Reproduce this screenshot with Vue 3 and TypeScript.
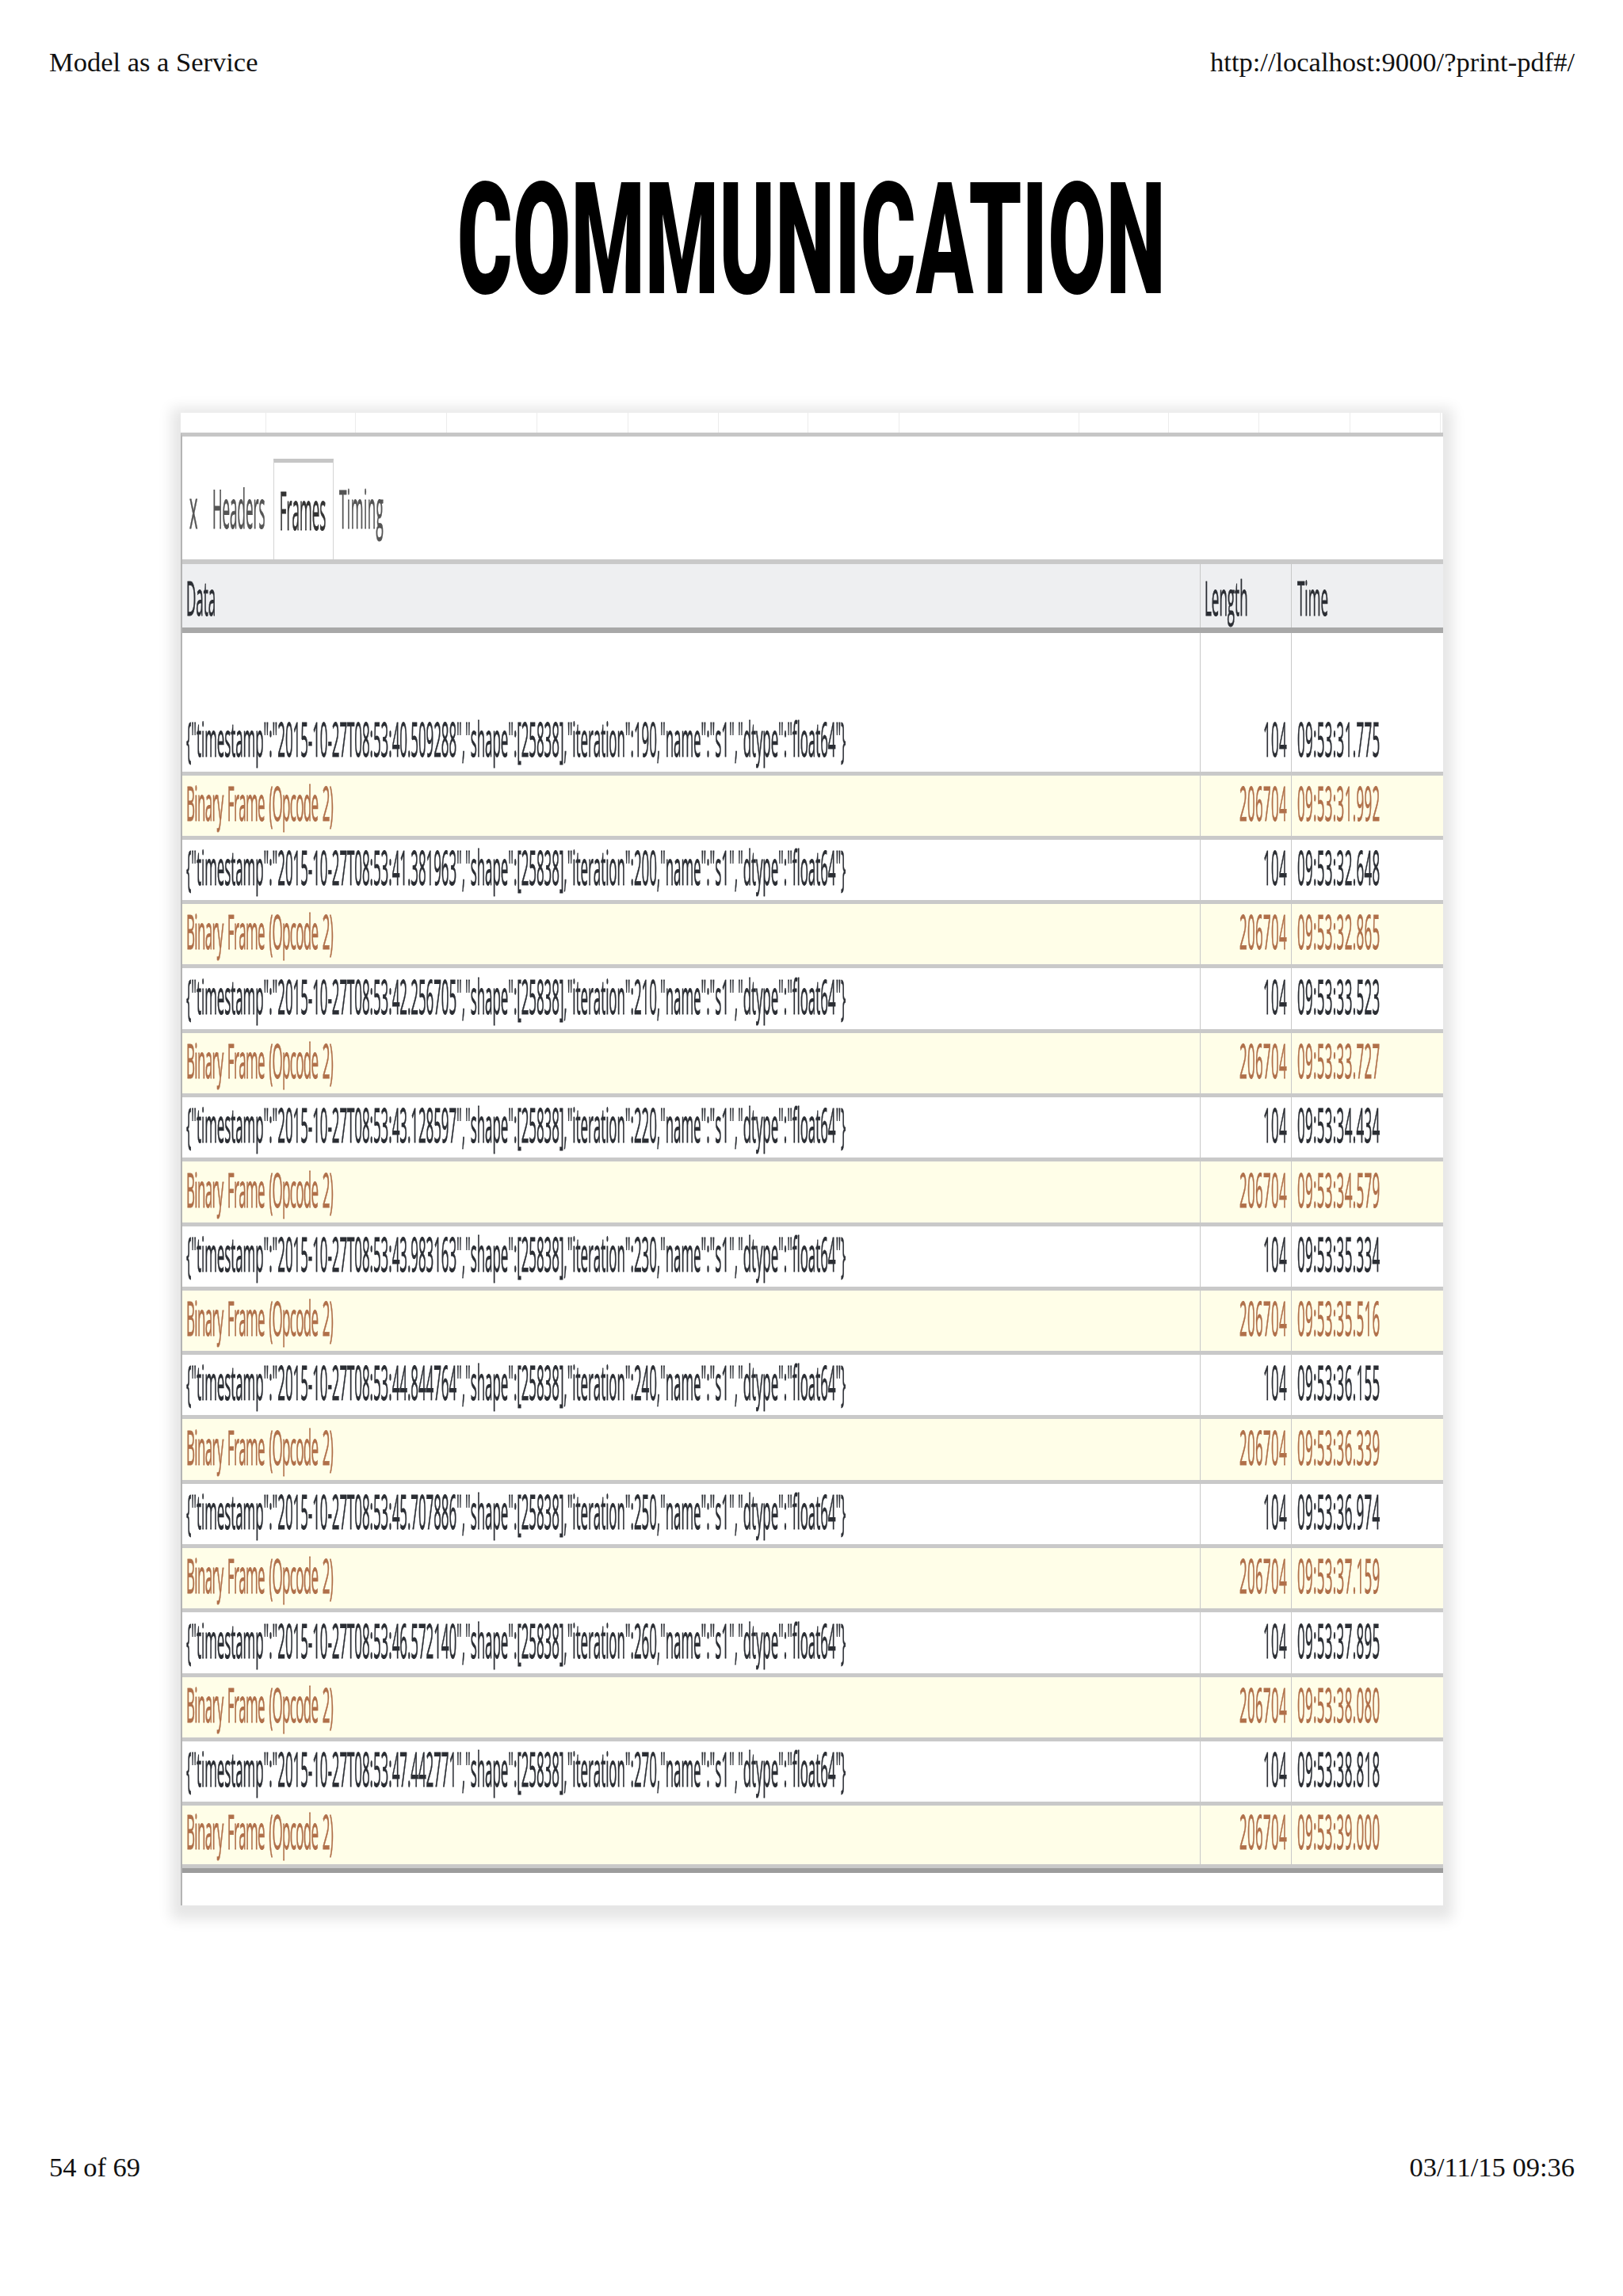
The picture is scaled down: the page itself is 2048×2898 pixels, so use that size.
<script setup lang="ts">
interface FrameRow {
  data: string
  length: number
  time: string
  binary: boolean
}

const stripCells = [108, 113, 115, 114, 115, 114, 113, 115, 227, 113, 114, 115, 114, 3]

const messages = [
  ['40.509288', 190, '31.775', '31.992'],
  ['41.381963', 200, '32.648', '32.865'],
  ['42.256705', 210, '33.523', '33.727'],
  ['43.128597', 220, '34.434', '34.579'],
  ['43.983163', 230, '35.334', '35.516'],
  ['44.844764', 240, '36.155', '36.339'],
  ['45.707886', 250, '36.974', '37.159'],
  ['46.572140', 260, '37.895', '38.080'],
  ['47.442771', 270, '38.818', '39.000'],
] as const

const rows: FrameRow[] = messages.flatMap(([stamp, iteration, sent, received]) => [
  {
    data: `{"timestamp":"2015-10-27T08:53:${stamp}","shape":[25838],"iteration":${iteration},"name":"s1","dtype":"float64"}`,
    length: 104,
    time: `09:53:${sent}`,
    binary: false,
  },
  {
    data: 'Binary Frame (Opcode 2)',
    length: 206704,
    time: `09:53:${received}`,
    binary: true,
  },
])
</script>

<template>
  <div class="page">
    <header class="page-line">
      <span>Model as a Service</span>
      <span>http://localhost:9000/?print-pdf#/</span>
    </header>

    <h1 class="title"><span>COMMUNICATION</span></h1>

    <section class="shot">
      <div class="strip">
        <i v-for="(width, i) in stripCells" :key="i" :style="{ width: width + 'px' }"></i>
      </div>
      <div class="panel">
        <div class="tabs">
          <span class="tab close"><b>x</b></span>
          <span class="tab headers"><b>Headers</b></span>
          <span class="tab frames"><b>Frames</b></span>
          <span class="tab timing"><b>Timing</b></span>
        </div>

        <div class="grid head">
          <div class="cell"><span>Data</span></div>
          <div class="cell"><span>Length</span></div>
          <div class="cell time"><span>Time</span></div>
        </div>

        <div
          v-for="(row, i) in rows"
          :key="i"
          class="grid row"
          :class="{ binary: row.binary, first: i === 0, last: i === rows.length - 1 }"
        >
          <div class="cell data"><span>{{ row.data }}</span></div>
          <div class="cell num"><span>{{ row.length }}</span></div>
          <div class="cell time"><span>{{ row.time }}</span></div>
        </div>
        <div class="table-end"></div>
      </div>
    </section>

    <footer class="page-line bottom">
      <span>54 of 69</span>
      <span>03/11/15 09:36</span>
    </footer>
  </div>
</template>

<style scoped>
.page {
  width: 2048px;
  height: 2898px;
  display: flex;
  flex-direction: column;
  background: #fff;
  overflow: hidden;
}

.page-line {
  display: flex;
  justify-content: space-between;
  padding: 58px 61px 0 62px;
  font-family: "Liberation Serif", serif;
  font-size: 34.5px;
  line-height: 40px;
  color: #111;
}

.page-line.bottom {
  margin-top: auto;
  padding-top: 0;
  padding-bottom: 143px;
}

.title {
  margin: 145px 0 158px;
  height: 120px;
  text-align: center;
  font-family: Roboto, "Liberation Sans", sans-serif;
  font-size: 106px;
  font-weight: 900;
  line-height: 120px;
  letter-spacing: 0.5px;
  color: #000;
}

.title span {
  display: inline-block;
  transform: scaleY(1.86);
}

.shot {
  width: 1593px;
  height: 1884px;
  margin-left: 228px;
  background: #fff;
  box-shadow: 0 6px 16px 12px rgba(0, 0, 0, 0.1);
  font-family: "Open Sans", sans-serif;
  font-size: 17px;
  color: #2b2e34;
  filter: blur(0.6px);
  -webkit-text-stroke: 0.25px currentColor;
}

.strip {
  display: flex;
  height: 25px;
}

.strip i {
  border-right: 1px solid #ececec;
  box-sizing: border-box;
}

.panel {
  height: 1859px;
  border-left: 2px solid #b4b4b4;
  box-sizing: border-box;
  border-top: 5px solid #c6c6c6;
}

.tabs {
  display: flex;
  align-items: flex-end;
  height: 155px;
  border-bottom: 6px solid #c9c9c9;
}

.tab {
  display: flex;
  align-items: center;
  height: 127px;
  padding-bottom: 3px;
  box-sizing: border-box;
  color: #555;
}

.tab b {
  display: block;
  font-weight: 400;
  transform: scaleY(3.95);
}

.close {
  width: 38px;
  padding-left: 9px;
  font-size: 20px;
}

.close b {
  transform: scaleY(3.45);
}

.headers {
  width: 77px;
}

.frames {
  width: 76px;
  justify-content: center;
  padding-right: 2px;
  border: 1px solid #d4d4d4;
  border-top: 5px solid #c6c6c6;
  border-bottom: 0;
  color: #333;
}

.timing {
  padding-left: 7px;
  letter-spacing: 0.5px;
}

.grid {
  display: grid;
  grid-template-columns: 1284px 115px 192px;
  grid-template-rows: minmax(0, 1fr);
  box-sizing: border-box;
}

.cell {
  display: flex;
  align-items: flex-end;
  padding-left: 5px;
  min-width: 0;
  border-left: 1px solid #c8c8c8;
}

.cell:first-child {
  border-left: 0;
}

.cell span {
  display: block;
  height: 72px;
  line-height: 72px;
  white-space: nowrap;
  transform: scaleY(3.55);
}

.row .cell {
  padding-bottom: 4px;
}

.cell.time {
  padding-left: 7px;
}

.cell.num {
  justify-content: flex-end;
  padding-right: 5px;
}

.data span {
  letter-spacing: -0.09px;
}

.binary .data span {
  letter-spacing: -0.67px;
  word-spacing: 1.5px;
}

.num span,
.row .time span {
  letter-spacing: 0.3px;
}

.head {
  height: 87px;
  background: #eeeff1;
  border-bottom: 7px solid #a8a8a8;
}

.row {
  height: 81.3px;
  border-bottom: 5px solid #c9c9c9;
}

.row.first {
  height: 179.5px;
}

.row.last {
  height: 79px;
}

.row.binary {
  background: #fffee8;
  color: #b0704a;
}

.table-end {
  height: 6px;
  background: #9c9c9c;
}
</style>
